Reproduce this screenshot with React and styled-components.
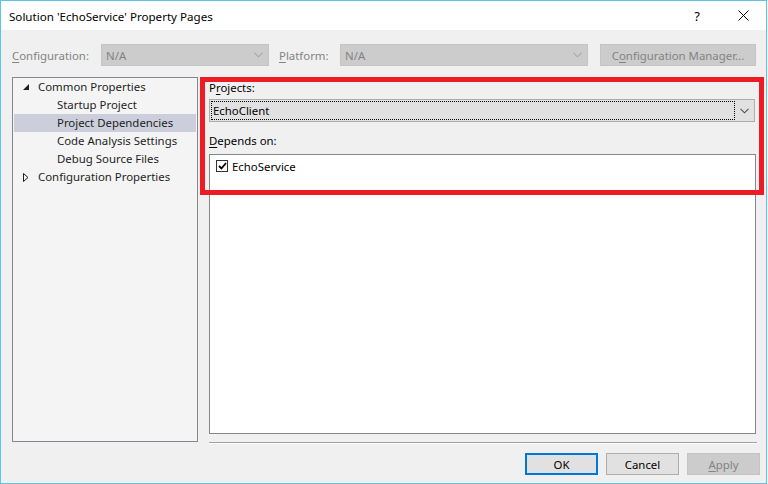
import React from "react";
import styled, { createGlobalStyle } from "styled-components";

const Global = createGlobalStyle`
  html, body { margin: 0; padding: 0; background: #ffffff; }
  body { font-family: "Noto Sans", "Segoe UI", "Liberation Sans", sans-serif; font-size: 11.4px; color: #000; }
  * { box-sizing: border-box; }
`;

const Window = styled.div`
  position: relative;
  width: 767px;
  height: 484px;
  border: 1px solid #5cc4e4;
  display: flex;
  flex-direction: column;
  background: #f0f0f0;
  overflow: hidden;
`;

const TitleBar = styled.div`
  height: 29px;
  background: #ffffff;
  display: flex;
  align-items: center;
  padding-left: 8px;
  flex: none;
`;

const Title = styled.div`
  flex: 1;
  font-size: 11.6px;
  color: #000;
  padding-top: 1px;
`;

const TitleButton = styled.div`
  width: 46px;
  height: 29px;
  display: flex;
  align-items: center;
  justify-content: center;
  font-size: 13px;
  color: #000;
`;

const Body = styled.div`
  flex: 1;
  display: flex;
  flex-direction: column;
  padding: 14px 6px 8px 11px;
`;

const ConfigRow = styled.div`
  display: flex;
  align-items: center;
  height: 22px;
`;

const Label = styled.span`
  color: ${(p) => (p.$disabled ? "#838383" : "#000")};
  width: ${(p) => p.$width || "auto"};
  flex: none;
`;

const U = styled.span`
  text-decoration: underline;
  text-underline-offset: 2px;
`;

const Combo = styled.div`
  width: ${(p) => p.$width};
  height: ${(p) => p.$height || "22px"};
  flex: none;
  background: ${(p) => (p.$disabled ? "#cccccc" : "#e1e1e1")};
  border: 1px solid ${(p) => (p.$disabled ? "#c4c4c4" : "#adadad")};
  display: flex;
  align-items: center;
  padding: 1px;
  color: ${(p) => (p.$disabled ? "#838383" : "#000")};
`;

const ComboText = styled.div`
  flex: 1;
  height: 100%;
  display: flex;
  align-items: center;
  padding-left: ${(p) => (p.$focus ? "1px" : "2px")};
  border: 1px ${(p) => (p.$focus ? "dotted #000" : "solid transparent")};
`;

const ComboArrow = styled.div`
  width: 18px;
  display: flex;
  align-items: center;
  justify-content: center;
`;

const Button = styled.div`
  width: ${(p) => p.$width || "73px"};
  height: 22px;
  flex: none;
  display: flex;
  align-items: center;
  justify-content: center;
  background: ${(p) => (p.$disabled ? "#cccccc" : "#e1e1e1")};
  border: ${(p) =>
    p.$default ? "2px solid #0078d7" : p.$disabled ? "1px solid #c4c4c4" : "1px solid #adadad"};
  color: ${(p) => (p.$disabled ? "#838383" : "#000")};
`;

const Main = styled.div`
  display: flex;
  align-items: flex-start;
  margin-top: 11px;
  gap: 11px;
`;

const Tree = styled.div`
  width: 186px;
  height: 365px;
  flex: none;
  background: #f4f4f4;
  border: 1px solid #828790;
  padding: 0 1px;
`;

const TreeRow = styled.div`
  height: 18px;
  display: flex;
  align-items: center;
  padding-left: ${(p) => (p.$level ? "43px" : "9px")};
  padding-bottom: 1px;
  background: ${(p) => (p.$selected ? "#cccedb" : "transparent")};
  color: #1e1e1e;
`;

const Expander = styled.span`
  width: 15px;
  flex: none;
  display: flex;
  align-items: center;
  padding-top: 1px;
`;

const RightPane = styled.div`
  width: 548px;
  height: 367px;
  display: flex;
  flex-direction: column;
`;

const FieldLabel = styled.div`
  height: 16px;
  display: flex;
  align-items: center;
  margin-top: ${(p) => p.$mt || "0px"};
`;

const ListBox = styled.div`
  flex: 1;
  width: 547px;
  margin-top: 6px;
  background: #ffffff;
  border: 1px solid #828790;
  padding: 2px 6px;
`;

const ListItem = styled.div`
  height: 18px;
  display: flex;
  align-items: center;
  gap: 4px;
`;

const CheckBox = styled.span`
  width: 12px;
  height: 12px;
  border: 1px solid #333;
  background: #fff;
  display: flex;
  align-items: center;
  justify-content: center;
`;

const Separator = styled.div`
  height: 2px;
  margin-top: 8px;
  border-top: 1px solid #a0a0a0;
  border-bottom: 1px solid #ffffff;
`;

const Footer = styled.div`
  display: flex;
  justify-content: flex-end;
  gap: 8px;
  margin-top: 9px;
`;

const Highlight = styled.div`
  position: absolute;
  left: 199px;
  top: 76px;
  width: 564px;
  height: 118px;
  border: 5px solid #ed1c24;
  pointer-events: none;
`;

const Chevron = ({ color }) => (
  <svg width="9" height="6" viewBox="0 0 9 6">
    <path d="M0.5 0.8 L4.5 4.8 L8.5 0.8" fill="none" stroke={color} strokeWidth="1.1" />
  </svg>
);

export default function App() {
  return (
    <>
      <Global />
      <Window>
        <TitleBar>
          <Title>Solution 'EchoService' Property Pages</Title>
          <TitleButton>?</TitleButton>
          <TitleButton>
            <svg width="11" height="11" viewBox="0 0 11 11">
              <path d="M0.5 0.5 L10.5 10.5 M10.5 0.5 L0.5 10.5" stroke="#000" strokeWidth="1" />
            </svg>
          </TitleButton>
        </TitleBar>
        <Body>
          <ConfigRow>
            <Label $disabled $width="89px">
              <U>C</U>onfiguration:
            </Label>
            <Combo $disabled $width="168px">
              <ComboText>N/A</ComboText>
              <ComboArrow>
                <Chevron color="#a8a8a8" />
              </ComboArrow>
            </Combo>
            <Label $disabled $width="61px" style={{ marginLeft: "10px" }}>
              <U>P</U>latform:
            </Label>
            <Combo $disabled $width="248px">
              <ComboText>N/A</ComboText>
              <ComboArrow>
                <Chevron color="#a8a8a8" />
              </ComboArrow>
            </Combo>
            <Button $disabled $width="156px" style={{ marginLeft: "12px" }}>
              C<U>o</U>nfiguration Manager...
            </Button>
          </ConfigRow>
          <Main>
            <Tree>
              <TreeRow>
                <Expander>
                  <svg width="6" height="6" viewBox="0 0 6 6">
                    <polygon points="0,6 6,6 6,0" fill="#1e1e1e" />
                  </svg>
                </Expander>
                Common Properties
              </TreeRow>
              <TreeRow $level>Startup Project</TreeRow>
              <TreeRow $level $selected>Project Dependencies</TreeRow>
              <TreeRow $level>Code Analysis Settings</TreeRow>
              <TreeRow $level>Debug Source Files</TreeRow>
              <TreeRow>
                <Expander>
                  <svg width="6" height="9" viewBox="0 0 6 9">
                    <path d="M0.5 0.5 L5 4.5 L0.5 8.5 Z" fill="none" stroke="#1e1e1e" strokeWidth="1" />
                  </svg>
                </Expander>
                Configuration Properties
              </TreeRow>
            </Tree>
            <RightPane>
              <FieldLabel $mt="2px">
                <span>
                  P<U>r</U>ojects:
                </span>
              </FieldLabel>
              <Combo $height="23px" $width="546px" style={{ marginTop: "4px" }}>
                <ComboText $focus>EchoClient</ComboText>
                <ComboArrow>
                  <Chevron color="#505050" />
                </ComboArrow>
              </Combo>
              <FieldLabel $mt="10px">
                <span>
                  <U>D</U>epends on:
                </span>
              </FieldLabel>
              <ListBox>
                <ListItem>
                  <CheckBox>
                    <svg width="9" height="8" viewBox="0 0 9 8">
                      <path d="M1 4 L3.5 6.5 L8 1" fill="none" stroke="#000" strokeWidth="1.8" />
                    </svg>
                  </CheckBox>
                  EchoService
                </ListItem>
              </ListBox>
              <Separator />
            </RightPane>
          </Main>
          <Footer>
            <Button $default>OK</Button>
            <Button>Cancel</Button>
            <Button $disabled>
              <span>
                <U>A</U>pply
              </span>
            </Button>
          </Footer>
        </Body>
        <Highlight />
      </Window>
    </>
  );
}
